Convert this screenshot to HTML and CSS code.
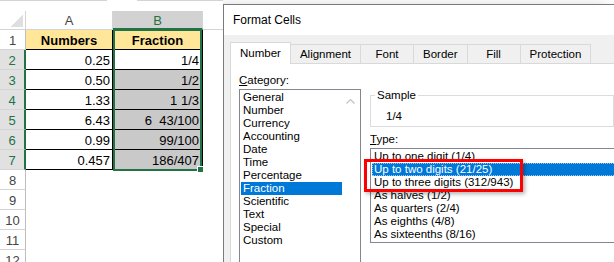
FILE: index.html
```html
<!DOCTYPE html>
<html lang="en">
<head>
<meta charset="utf-8">
<title>Format Cells - Fraction</title>
<link rel="stylesheet" href="styles.css">
</head>
<body>
<div class="screen">
  <div class="sheet">
    <div class="topline"><span class="seg seg1"></span><span class="seg seg2"></span></div>
    <div class="grid">
      <div class="corner"></div>
      <div class="ch">A</div>
      <div class="ch ch-sel">B</div>
      <div class="ch ch-c"></div>

      <div class="rh">1</div><div class="c hdr">Numbers</div><div class="c hdr">Fraction</div><div class="cx"></div>
      <div class="rh sel">2</div><div class="c">0.25</div><div class="c b">1/4</div><div class="cx"></div>
      <div class="rh sel">3</div><div class="c">0.50</div><div class="c b shade">1/2</div><div class="cx"></div>
      <div class="rh sel">4</div><div class="c">1.33</div><div class="c b shade">1 1/3</div><div class="cx"></div>
      <div class="rh sel">5</div><div class="c">6.43</div><div class="c b shade">6  43/100</div><div class="cx"></div>
      <div class="rh sel">6</div><div class="c">0.99</div><div class="c b shade">99/100</div><div class="cx"></div>
      <div class="rh sel">7</div><div class="c">0.457</div><div class="c b shade">186/407</div><div class="cx"></div>
      <div class="rh">8</div><div class="e"></div><div class="e"></div><div class="cx"></div>
      <div class="rh">9</div><div class="e"></div><div class="e"></div><div class="cx"></div>
      <div class="rh">10</div><div class="e"></div><div class="e"></div><div class="cx"></div>
      <div class="rh">11</div><div class="e"></div><div class="e"></div><div class="cx"></div>
      <div class="rh">12</div><div class="e"></div><div class="e"></div><div class="cx"></div>
    </div>
    <div class="selection"><span class="handle"></span></div>
  </div>

  <div class="dialog">
    <div class="titlebar">Format Cells</div>
    <div class="tabs">
      <div class="tab active">Number</div>
      <div class="tab">Alignment</div>
      <div class="tab">Font</div>
      <div class="tab">Border</div>
      <div class="tab">Fill</div>
      <div class="tab">Protection</div>
    </div>
    <div class="panel">
      <div class="cat-col">
        <div class="label"><u>C</u>ategory:</div>
        <div class="listbox cat">
          <div class="items">
            <div class="item">General</div>
            <div class="item">Number</div>
            <div class="item">Currency</div>
            <div class="item">Accounting</div>
            <div class="item">Date</div>
            <div class="item">Time</div>
            <div class="item">Percentage</div>
            <div class="item sel">Fraction</div>
            <div class="item">Scientific</div>
            <div class="item">Text</div>
            <div class="item">Special</div>
            <div class="item">Custom</div>
          </div>
          <div class="vscroll">
            <svg width="9" height="6" viewBox="0 0 9 6"><polyline points="0.5,5.5 4.5,1.5 8.5,5.5" fill="none" stroke="#C2C2C2" stroke-width="1.2"/></svg>
          </div>
        </div>
      </div>
      <div class="right-col">
        <fieldset class="sample">
          <legend>Sample</legend>
          <div class="sample-val">1/4</div>
        </fieldset>
        <div class="label type-label"><u>T</u>ype:</div>
        <div class="listbox type">
          <div class="item">Up to one digit (1/4)</div>
          <div class="item sel">Up to two digits (21/25)</div>
          <div class="item">Up to three digits (312/943)</div>
          <div class="item">As halves (1/2)</div>
          <div class="item">As quarters (2/4)</div>
          <div class="item">As eighths (4/8)</div>
          <div class="item">As sixteenths (8/16)</div>
        </div>
      </div>
    </div>
  </div>

  <div class="callout"></div>
</div>
</body>
</html>
```

FILE: styles.css
```css
html, body {
  margin: 0;
  padding: 0;
  background: #fff;
}

body {
  font-family: "Liberation Sans", Arial, sans-serif;
  color: #000;
}

.screen {
  position: relative;
  display: flex;
  width: 614px;
  height: 262px;
  overflow: hidden;
}

/* ---------- spreadsheet ---------- */
.sheet {
  position: relative;
  flex: none;
  width: 223px;
  background: #fff;
}

.topline {
  display: flex;
  gap: 30px;
  height: 11px;
  align-items: flex-start;
}

.seg {
  height: 1px;
  background: #D4D4D4;
}

.seg1 { width: 107px; }
.seg2 { flex: 1; }

.grid {
  display: grid;
  grid-template-columns: 26px 87px 90px 20px;
  grid-template-rows: 19px;
  grid-auto-rows: 20px;
  font-size: 13px;
}

.corner {
  display: flex;
  justify-content: flex-end;
  align-items: flex-end;
  padding: 0 2px 2px 0;
  border-right: 1px solid #D4D4D4;
  border-bottom: 1px solid #D4D4D4;
}

.corner::after {
  content: "";
  width: 13px;
  height: 13px;
  background: linear-gradient(135deg, transparent 50%, #DFDFDF 50%);
}

.ch {
  text-align: center;
  color: #444;
  line-height: 18px;
  padding-top: 1px;
  border-right: 1px solid #D4D4D4;
  border-bottom: 1px solid #D4D4D4;
}

.ch-sel {
  background: #D2D2D2;
  color: #217346;
  border-bottom: 2px solid #217346;
}

.ch-c {
  border-right: none;
}

.rh {
  text-align: center;
  color: #444;
  line-height: 17px;
  padding-top: 2px;
  border-right: 1px solid #BDBDBD;
  border-bottom: 1px solid #D4D4D4;
}

.rh.sel {
  background: #E1E1E1;
  color: #217346;
  border-right: 2px solid #217346;
}

.c {
  background: #fff;
  text-align: right;
  white-space: pre;
  line-height: 17px;
  padding: 2px 2px 0 0;
  border-right: 1px solid #000;
  border-bottom: 1px solid #000;
}

.c.hdr {
  background: #FFE699;
  font-weight: bold;
  text-align: center;
  padding-right: 0;
}

.c.b {
  padding-right: 3px;
}

.c.shade {
  background: #C9C9C9;
}

.selection {
  position: absolute;
  left: 113px;
  top: 29px;
  width: 85px;
  height: 138px;
  border: 2px solid #217346;
}

.handle {
  position: absolute;
  right: -4px;
  bottom: -4px;
  width: 5px;
  height: 5px;
  background: #217346;
  border: 1px solid #fff;
}

/* ---------- dialog ---------- */
.dialog {
  flex: 1;
  min-width: 0;
  display: flex;
  flex-direction: column;
  margin-top: 4px;
  border-top: 1px solid #7A7A7A;
  border-left: 1px solid #7A7A7A;
  background: #F0F0F0;
  box-shadow: -6px 2px 14px rgba(0, 0, 0, 0.18);
  overflow: hidden;
  font-size: 11.5px;
}

.titlebar {
  flex: none;
  height: 30px;
  line-height: 30px;
  padding-left: 9px;
  background: #fff;
  font-size: 12px;
}

.tabs {
  flex: none;
  display: flex;
  align-items: flex-end;
  height: 21px;
  margin: 7px 0 0 6px;
}

.tab {
  box-sizing: border-box;
  min-width: 54px;
  height: 19px;
  line-height: 18px;
  padding: 0 9px;
  margin-left: -1px;
  text-align: center;
  background: #F0F0F0;
  border: 1px solid #D9D9D9;
  border-bottom: none;
}

.tab:first-child {
  margin-left: 0;
}

.tab.active {
  position: relative;
  z-index: 1;
  height: 22px;
  line-height: 20px;
  margin-bottom: -1px;
  background: #fff;
}

.panel {
  flex: 1;
  display: flex;
  width: 420px;
  margin-left: 6px;
  padding: 9px 0 0 8px;
  background: #fff;
  border: 1px solid #D9D9D9;
}

.label {
  line-height: 14px;
  margin-bottom: 2px;
  white-space: nowrap;
}

.cat-col {
  flex: none;
  width: 122px;
}

.listbox {
  border: 1px solid #828790;
  padding: 1px;
  background: #fff;
}

.cat {
  display: flex;
  height: 200px;
}

.items {
  flex: 1;
}

.item {
  line-height: 13px;
  padding-left: 2px;
  white-space: nowrap;
}

.item.sel {
  background: #0078D7;
  color: #fff;
}

.vscroll {
  flex: none;
  width: 17px;
  display: flex;
  justify-content: center;
  align-items: flex-start;
  padding-top: 7px;
}

.right-col {
  flex: none;
  width: 270px;
  margin-left: 9px;
}

.sample {
  box-sizing: border-box;
  width: 244px;
  min-width: 0;
  margin: 15px 0 0;
  padding: 7px 0 3px 4px;
  border: 1px solid #DCDCDC;
}

.sample legend {
  padding: 0 2px;
  line-height: 14px;
}

.sample-val {
  line-height: 14px;
  padding-left: 11px;
}

.type-label {
  margin-top: 5px;
}

.type {
  width: 270px;
}

.type .item.sel {
  outline: 1px dotted #9DC6EE;
  outline-offset: -1px;
}

/* red highlight drawn over the list */
.callout {
  position: absolute;
  left: 364px;
  top: 159px;
  width: 153px;
  height: 27px;
  border: 3px solid #FF0000;
  box-shadow: 2px 2px 4px rgba(0, 0, 0, 0.3);
}
```
